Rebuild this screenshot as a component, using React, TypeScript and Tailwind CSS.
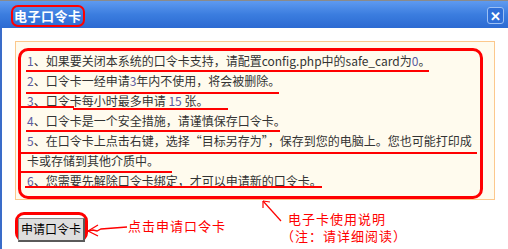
import React from "react";

const font = { fontFamily: '"Noto Sans CJK SC", "Noto Sans", sans-serif' };

function Num({ children }: { children: React.ReactNode }) {
    return <span className="text-[#5a5aa0]">{children}</span>;
}

function App() {
    return (
        <div className="w-[508px] h-[249px] bg-white flex flex-col overflow-hidden" style={font}>
            {/* title bar */}
            <div className="h-[28px] shrink-0 border-t border-[#8a8a8a] bg-linear-to-b from-[#5e9af0] via-[#3b7ddf] to-[#2c6ad2] flex items-start justify-between pl-[11px] pr-[4px] pt-[4px]">
                <span className="h-[22px] flex items-center border-2 border-[#ff0000] rounded-[7px] px-[1px] text-[13px] font-bold text-white tracking-[0.5px]">
                    电子口令卡
                </span>
                <span className="mt-[2px] w-[17px] h-[17px] flex items-center justify-center border border-[#9cc0f4] rounded-[3px] bg-[#2f6fd8] text-white text-[13px] font-bold leading-none">
                    ✕
                </span>
            </div>

            {/* body */}
            <div className="flex-1 border-l-2 border-[#3a6cc9] pl-[13px] pt-[13px]">
                <div className="w-[480px] h-[159px] border border-[#fcc88c] bg-[#fffbee] pl-[2px] pt-[6px]">
                    <div className="w-[465px] h-[151px] border-[3px] border-[#ff0000] rounded-[10px] pl-[6px] text-[12px] leading-[20px] text-[#333]">
                        <div className="relative h-[20px] whitespace-nowrap">
                            <Num>1</Num>、如果要关闭本系统的口令卡支持，请配置config.php中的safe_card为<Num>0</Num>。
                            <div className="absolute left-[-1px] top-[19px] w-[403px] h-[2px] bg-[#ff0000]" />
                        </div>
                        <div className="relative h-[20px] whitespace-nowrap">
                            <Num>2</Num>、口令卡一经申请<Num>3</Num>年内不使用，将会被删除。
                            <div className="absolute left-[-1px] top-[21px] w-[253px] h-[2px] bg-[#ff0000]" />
                        </div>
                        <div className="relative h-[20px] whitespace-nowrap">
                            <Num>3</Num>、口令卡每小时最多申请 <Num>15</Num> 张。
                            <div className="absolute left-[-7px] top-[15px] w-[54px] h-[2px] bg-[#ff0000]" />
                            <div className="absolute left-[46px] top-[17px] w-[155px] h-[2px] bg-[#ff0000]" />
                        </div>
                        <div className="relative h-[20px] whitespace-nowrap">
                            <Num>4</Num>、口令卡是一个安全措施，请谨慎保存口令卡。
                            <div className="absolute left-[-1px] top-[19px] w-[254px] h-[2px] bg-[#ff0000]" />
                        </div>
                        <div className="relative h-[20px] whitespace-nowrap">
                            <Num>5</Num>、在口令卡上点击右键，选择“目标另存为”，保存到您的电脑上。您也可能打印成
                            <div className="absolute left-[-7px] top-[21px] w-[457px] h-[2px] bg-[#ff0000]" />
                        </div>
                        <div className="relative h-[20px] whitespace-nowrap">
                            卡或存储到其他介质中。
                            <div className="absolute left-[-7px] top-[20px] w-[152px] h-[2px] bg-[#ff0000]" />
                        </div>
                        <div className="relative h-[20px] whitespace-nowrap">
                            <Num>6</Num>、您需要先解除口令卡绑定，才可以申请新的口令卡。
                            <div className="absolute left-[-2px] top-[15px] w-[297px] h-[2px] bg-[#ff0000]" />
                        </div>
                    </div>
                </div>

                {/* bottom row */}
                <div className="flex items-start">
                    <div className="mt-[12px] w-[73px] h-[30px] border-[3px] border-[#ff0000] rounded-[9px]">
                        <button className="w-[67px] h-[24px] bg-[#dedede] border border-[#8a8a8a] border-r-2 border-b-2 border-r-[#5a5a5a] border-b-[#5a5a5a] text-[12px] text-black leading-none">
                            申请口令卡
                        </button>
                    </div>
                    <svg className="mt-[19px] ml-[-1px]" width="41" height="18" viewBox="0 0 41 18">
                        <g stroke="#ff0000" strokeWidth="1.3" fill="none">
                            <path d="M1 12 L11 6" />
                            <path d="M1 12 L11 17" />
                            <path d="M1 12 L6 11 L10 12 L14 10 L27 9 L40 8" />
                        </g>
                    </svg>
                    <div className="mt-[18px] text-[13px] leading-[16px] tracking-[1px] text-[#ff0000]">
                        点击申请口令卡
                    </div>
                    <div className="relative ml-[34px]">
                        <svg className="absolute left-0 top-0" width="26" height="26" viewBox="0 0 26 26">
                            <g stroke="#ff0000" strokeWidth="1.2" fill="none">
                                <path d="M3 1 L21 21" />
                                <path d="M3 1 L3 8" />
                                <path d="M3 1 L10 2" />
                            </g>
                        </svg>
                        <div className="pl-[21px] pt-[10px] text-[13px] leading-[17px] tracking-[1px] text-[#ff0000] whitespace-nowrap">
                            <div className="pl-[7px]">电子卡使用说明</div>
                            <div>（注：请详细阅读）</div>
                        </div>
                    </div>
                </div>
            </div>
        </div>
    );
}

export default App;
